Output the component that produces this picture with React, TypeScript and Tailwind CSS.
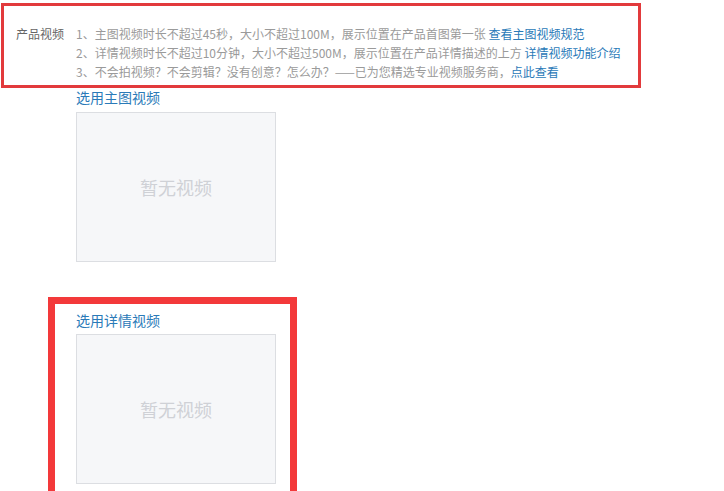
const font = "font-['Microsoft_YaHei','Noto_Sans_CJK_SC',sans-serif]";

function EmptyVideo() {
  return (
    <div className="w-[200px] h-[150px] border border-[#dcdee2] bg-[#f6f7f9] flex items-center justify-center">
      <span className="text-[18px] text-[#cfd1d6] leading-none">暂无视频</span>
    </div>
  );
}

export default function App() {
  return (
    <div className={`w-[724px] h-[491px] bg-white overflow-hidden ${font}`}>
      {/* Tips */}
      <div className="ml-[1px] mt-[3px] w-[640px] h-[85px] border-[3px] border-[#e23a3c] flex pl-[12px] pt-[18px]">
        <div className="w-[60px] shrink-0 text-[12px] leading-[19px] text-[#666]">产品视频</div>
        <div className="text-[12px] leading-[19px] text-[#9a9a9a] whitespace-nowrap">
          <p>
            1、主图视频时长不超过45秒，大小不超过100M，展示位置在产品首图第一张{' '}
            <a className="text-[#2a7ab8]">查看主图视频规范</a>
          </p>
          <p>
            2、详情视频时长不超过10分钟，大小不超过500M，展示位置在产品详情描述的上方{' '}
            <a className="text-[#2a7ab8]">详情视频功能介绍</a>
          </p>
          <p>
            3、不会拍视频？不会剪辑？没有创意？怎么办？——已为您精选专业视频服务商，
            <a className="text-[#2a7ab8]">点此查看</a>
          </p>
        </div>
      </div>

      {/* Main video */}
      <div className="ml-[76px]">
        <a className="block text-[14px] leading-[18px] text-[#2a7ab8]">选用主图视频</a>
        <div className="mt-[6px]">
          <EmptyVideo />
        </div>
      </div>

      {/* Detail video */}
      <div className="ml-[48px] mt-[35px] w-[249px] h-[210px] border-[7px] border-[#f3393a] pl-[21px] pt-[7px]">
        <a className="block text-[14px] leading-[18px] text-[#2a7ab8]">选用详情视频</a>
        <div className="mt-[5px]">
          <EmptyVideo />
        </div>
      </div>
    </div>
  );
}
